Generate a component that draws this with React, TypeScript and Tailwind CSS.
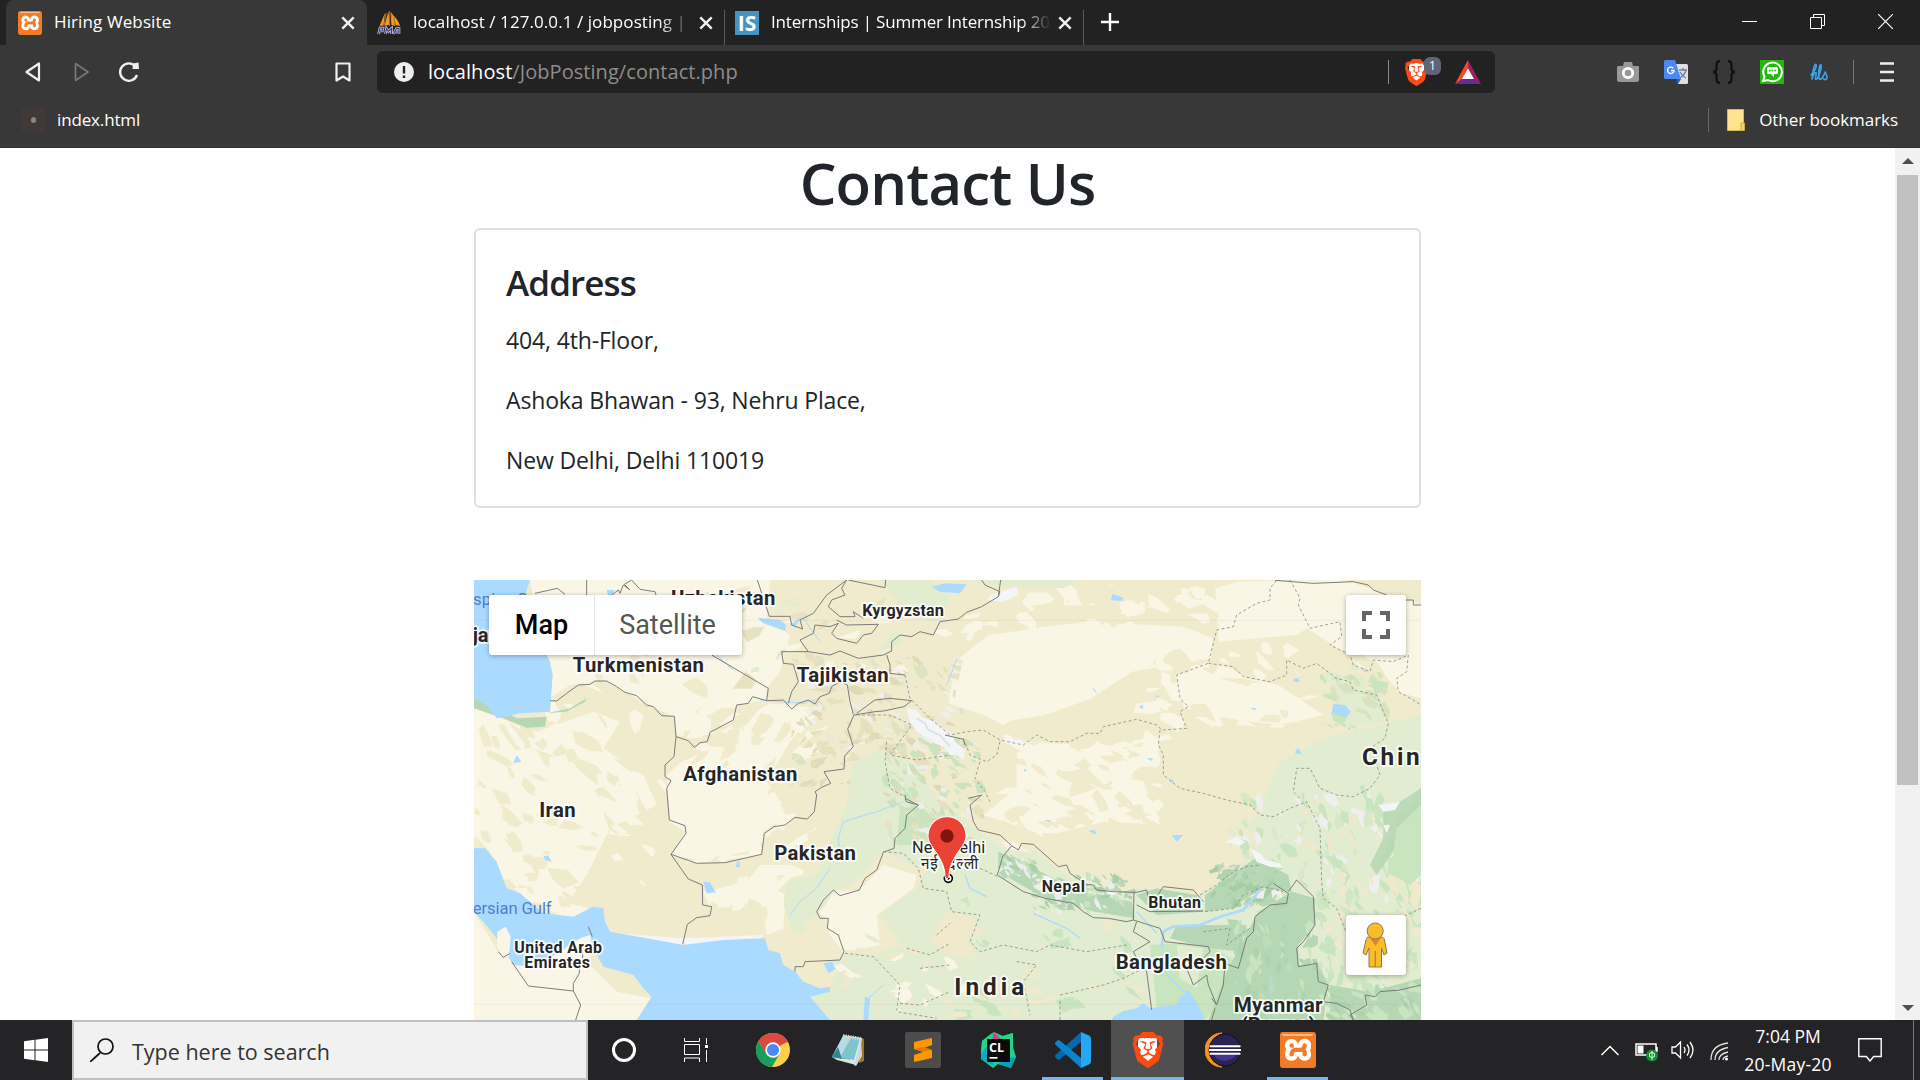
import React from "react";
import { SiBrave, SiXampp } from "react-icons/si";

type P = { className?: string };

/* ---------- small drawings ---------- */

const XamppIcon = ({ className }: P) => (
  <span className={`relative block overflow-hidden rounded-[3px] bg-[#f47b25] ${className ?? ""}`}>
    <span className="absolute inset-[12%] bg-white" />
    <SiXampp className="relative h-full w-full text-[#f47b25]" />
    <span className="absolute inset-x-[8%] top-[5%] h-[7%] rounded-b-full bg-[#fbb98a]" />
  </span>
);

const CloseX = ({ className }: P) => (
  <svg viewBox="0 0 14 14" className={className}>
    <path d="M2 2l10 10M12 2L2 12" stroke="#f0f0f0" strokeWidth="2.100" />
  </svg>
);

const PmaIcon = () => (
  <svg viewBox="0 0 24 24" className="h-6 w-6 shrink-0">
    <path d="M8 2L2.500 15l4-.5zM11.500 0l-4 14.500 5-.5zM13.500 1l1 13 1.500-.5zM17 5l1.500 9 4.500 1C22 11 20 8 17 5z" fill="#f9961e" />
    <path d="M14 1l3.500 5 .5 9-3-1z" fill="#f9961e" />
    <path d="M12.700 0v15M9 2L7 15M17 6l1 9" stroke="#a9743a" strokeWidth="1" />
    <path d="M1.500 23L3 17h3l-.7 3H2.500M8.500 23l1-5.500 2 3 3-3V23M16.500 23l3-5.500H22V23M18 21h4" fill="none" stroke="#c9c9e8" strokeWidth="2.600" />
    <path d="M1.500 23L3 17h3l-.7 3H2.500M8.500 23l1-5.500 2 3 3-3V23M16.500 23l3-5.500H22V23M18 21h4" fill="none" stroke="#3a3a80" strokeWidth="1.100" />
  </svg>
);

const Brave = ({ className }: P) => (
  <span className={`relative block ${className ?? ""}`}>
    <span className="absolute inset-x-[24%] inset-y-[18%] rounded-b-full bg-white" />
    <SiBrave className="relative h-full w-full text-[#fb4b13]" />
  </span>
);

const Chrome = () => (
  <svg viewBox="0 0 34 34" className="h-[34px] w-[34px]">
    <circle cx="17" cy="17" r="17" fill="#fdd04c" />
    <path d="M17 17L31.700 8.500A17 17 0 0 0 2.300 8.500z" fill="#db4a3e" />
    <path d="M17 9.300h15.200A17 17 0 0 0 17 0z" fill="#db4a3e" />
    <path d="M2.300 8.500A17 17 0 0 0 16 34l7.500-13L10 20z" fill="#169f5c" />
    <path d="M2.300 8.500L10.200 21l7-12z" fill="#db4a3e" />
    <path d="M2.300 8.500L9.500 21l4 3.500L17 25l-1.500 9A17 17 0 0 1 2.300 8.500z" fill="#169f5c" />
    <circle cx="17" cy="17" r="7.700" fill="#fff" />
    <circle cx="17" cy="17" r="6" fill="#4788f4" />
  </svg>
);

const Notepad = () => (
  <svg viewBox="0 0 34 34" className="h-[34px] w-[34px]">
    <path d="M30 5l3 1v22l-5 2z" fill="#a87620" />
    <path d="M12 2l19 3-5 27-6-2z" fill="#e9eff0" />
    <path d="M30 5l1 18-6 10-2-1z" fill="#cdd8da" />
    <path d="M12 3l17 3-6 21L1 24z" fill="#7fc3cf" />
    <path d="M12 3l8 1.500L9 25l-8-1z" fill="#b7dde2" />
    <path d="M1 24l22 3 2 5L6 27z" fill="#d9e6e8" />
    <path d="M1 24l6-10 4 12z" fill="#2e8695" />
    <path d="M12 3l18 3" stroke="#d5d5d5" strokeWidth="4" strokeDasharray="1.200 1.200" />
  </svg>
);

const CLion = () => (
  <svg viewBox="0 0 36 36" className="h-9 w-9">
    <path d="M2 9L14 0l9 4 10-3v14l3 10-5 11-13-4-5 4L1 27z" fill="#22d089" />
    <path d="M1 27l1-18 9 12 3 13z" fill="#0fa9c8" />
    <path d="M1 22L2 9l10-8-3 10z" fill="#21d789" />
    <path d="M14 0l8 9H12z" fill="#ed358c" />
    <path d="M23 4l10-3v14z" fill="#21d789" />
    <path d="M36 25l-5 11-13-4 12-6z" fill="#089fbd" />
    <rect x="7" y="7" width="23" height="23" fill="#0a0a0a" />
    <text x="9" y="19.500" fontFamily="Open Sans" fontWeight="700" fontSize="12.500" fill="#fff">CL</text>
    <rect x="9.500" y="25" width="8" height="1.700" fill="#fff" />
  </svg>
);

const Eclipse = () => (
  <svg viewBox="0 0 36 36" className="h-9 w-9">
    <path d="M17 1A17 17 0 0 0 17 35C1 30 1 6 17 1z" fill="#f7941e" stroke="#f7941e" />
    <circle cx="20" cy="18" r="16" fill="#2c2255" stroke="#101018" strokeWidth="1" />
    <path d="M9 23h22c-3 7-18 8-22 0z" fill="#473788" />
    <path d="M4.500 14.200h31M4 18h32M4.500 21.800h31" stroke="#fff" strokeWidth="2" />
  </svg>
);

const Translate = () => (
  <svg viewBox="0 0 24 24" className="h-6 w-6">
    <path d="M10 4h12.500A1.500 1.500 0 0 1 24 5.500v17a1.500 1.500 0 0 1-1.500 1.500H14z" fill="#e0e0e0" />
    <path d="M15 10h8M19 8v2m3 0c-1 4-3 6-6 8m0-6c1 2 4 5 6 6" fill="none" stroke="#6d8296" strokeWidth="1.300" />
    <path d="M1.500 0H11l6 19H1.500A1.500 1.500 0 0 1 0 17.500v-16A1.500 1.500 0 0 1 1.500 0z" fill="#4a89f3" />
    <path d="M12 19h5l-3 5z" fill="#3053c9" />
    <path d="M9.300 8.300A3.200 3.200 0 1 0 10 10.500H7" fill="none" stroke="#fff" strokeWidth="1.400" />
  </svg>
);

const Pegman = () => (
  <svg viewBox="0 0 26 46" className="h-[46px] w-[26px]">
    <path d="M7 15h12c2 0 3 1 3.500 3L25 31l-3 2-2.500-7V45H7V26l-3 7-3-2 3-13c.5-2 1.500-3 3-3z" fill="#fbbc2c" stroke="#8a7a50" strokeWidth="1" />
    <path d="M8 16h11l-5.500 8z" fill="#e0842a" />
    <path d="M13.200 29v16" stroke="#9b7430" strokeWidth="1" />
    <circle cx="13.200" cy="9" r="8" fill="#fbbc2c" stroke="#8a7a50" strokeWidth="1" />
  </svg>
);

/* ---------- terrain map ---------- */

const TAN = "#f1ebcd";
const LIGHT = "#faf6e6";
const WATER = "#aadaff";
const G1 = "#e2ecd0";
const G2 = "#c9e5c0";
const G3 = "#b6d7b4";

function seeded(seed: number) {
  let s = seed;
  return () => {
    s = (s * 16807) % 2147483647;
    return s / 2147483647;
  };
}

type Facet = { d: string; c: string };

function facets(seed: number, n: number, box: number[], size: number, tilt: number, colors: string[]): Facet[] {
  const r = seeded(seed);
  const out: Facet[] = [];
  for (let i = 0; i < n; i++) {
    const cx = box[0] + r() * (box[2] - box[0]);
    const cy = box[1] + r() * (box[3] - box[1]);
    const a = tilt + (r() - 0.5) * 1.1;
    const len = size * (0.4 + r());
    const wid = len * (0.25 + r() * 0.4);
    const k = 4 + Math.floor(r() * 4);
    const pts: string[] = [];
    for (let j = 0; j < k; j++) {
      const t = (j / k) * Math.PI * 2;
      const m = 0.35 + r() * 0.9;
      const px = Math.cos(t) * len * m;
      const py = Math.sin(t) * wid * m;
      pts.push(`${(cx + px * Math.cos(a) - py * Math.sin(a)).toFixed(0)},${(cy + px * Math.sin(a) + py * Math.cos(a)).toFixed(0)}`);
    }
    out.push({ d: pts.join(" "), c: colors[Math.floor(r() * colors.length)] });
  }
  return out;
}

const Facets = ({ list }: { list: Facet[] }) => (
  <g>
    {list.map((f, i) => (
      <polygon key={i} points={f.d} fill={f.c} />
    ))}
  </g>
);

const iranFacets = facets(11, 120, [20, 430, 600, 1060], 44, 0.6, [TAN, TAN, TAN, LIGHT]);
const turkFacets = facets(5, 44, [230, 80, 900, 470], 44, 0.7, [TAN, LIGHT]);
const kazFacets = facets(31, 36, [820, 20, 1540, 330], 36, -0.4, [LIGHT, TAN, "#e7e2c2", G1]);
const afgFacets = facets(17, 75, [640, 380, 1060, 1080], 46, -0.7, [TAN, LIGHT, TAN]);
const pamirFacets = facets(23, 190, [980, 250, 1480, 560], 22, 0.5, ["#e7e0be", "#e0d9b6", TAN, "#eee9d4", "#dfe3c4", "#efefef"]);
const hinduKush = facets(29, 70, [940, 470, 1240, 640], 20, -0.6, ["#e7e0be", "#e2dbb8", TAN, "#efe9cf"]);
const kashmirFacets = facets(41, 150, [1250, 490, 1540, 800], 20, 0.8, ["#d5e6c4", "#dcd9b8", G2, "#eeeeea", "#e7e0be", "#cfe0bd"]);
const northFacets = facets(53, 60, [1560, 30, 2260, 150], 46, 0.4, [LIGHT, TAN]);
const qaidamFacets = facets(59, 60, [2000, 200, 2520, 480], 42, 0.3, [TAN, LIGHT, LIGHT]);
const tibetFacets = facets(61, 130, [1600, 490, 2080, 820], 38, 0.25, [LIGHT, TAN, TAN]);
const tibetSouth = facets(67, 60, [1750, 760, 2320, 930], 26, -0.2, ["#ede5c6", "#eae2c2", TAN]);
const eastFacets = facets(71, 190, [2280, 660, 2853, 980], 28, 1.1, [G1, G2, "#d7e7c9", "#efe8cc", "#efeff0", G1]);
const qinghai = facets(79, 40, [2560, 270, 2740, 460], 24, 0.7, [G1, G2, "#d9e2be"]);
const himFacets = facets(83, 70, [1590, 850, 1700, 900], 18, 0.6, ["#a9cfa9", G3, G2, "#eceeee", "#bcd6b6"]);
const himEast = facets(87, 120, [1690, 900, 1980, 1010], 18, 0.5, ["#a9cfa9", G3, G2, "#eceeee", "#bcd6b6"]);
const arunFacets = facets(89, 60, [2230, 870, 2440, 990], 22, -0.6, ["#a6cca6", G3, "#aed2ac", "#bedabb"]);
const gangaFacets = facets(97, 90, [1430, 980, 2060, 1330], 34, 0.3, [G1, G2, "#f1e9cc", G1]);
const rajFacets = facets(101, 60, [1100, 1090, 1500, 1330], 34, 0.1, ["#f1e9cc", G1, G1, LIGHT]);
const burmaFacets = facets(103, 90, [2290, 1050, 2540, 1330], 26, 1.4, ["#aed2ae", G3, G3, "#bddcba", G2]);
const yunnanFacets = facets(107, 130, [2550, 940, 2853, 1230], 30, 1.2, [G1, G2, G1, "#d2e6c6", "#f1e9cc"]);
const laosFacets = facets(109, 50, [2560, 1240, 2853, 1335], 28, 0.8, ["#aed2ae", G2, G3]);

type LabelProps = { x: number; y: number; w?: number; s?: number; children: string; weight?: number; fill?: string; gap?: number };

const Label = ({ x, y, w, s = 61, children, weight = 700, fill = "#262626", gap }: LabelProps) => (
  <text
    x={x}
    y={y}
    textLength={w}
    fontSize={s}
    fontWeight={weight}
    fill={fill}
    letterSpacing={gap}
    stroke="#fff"
    strokeOpacity={fill === "#262626" ? 0.85 : 0}
    strokeWidth="11"
    strokeLinejoin="round"
    className="[paint-order:stroke]"
    fontFamily="Roboto, 'Noto Sans', sans-serif"
  >
    {children}
  </text>
);

const TerrainMap = () => (
  <svg viewBox="12 15 2841 1320" className="block h-[440px] w-[947px]">
    <rect x="0" y="0" width="2860" height="1340" fill={TAN} />

    {/* pale lowlands */}
    <g fill={LIGHT}>
      <path d="M180 15H900L890 130 960 180 930 290 890 340 890 375 800 390 790 440 700 490 620 480 610 425 520 380 400 315 300 330 240 370z" />
      <path d="M12 400L200 470 370 410 450 440 400 520 520 600 560 690 420 760 350 900 270 1020 110 950 60 830 12 780z" />
      <path d="M690 510L800 440 900 385 1040 400 960 500 890 620 960 720 880 770 880 840 680 865 605 840 645 770 600 740 590 600z" />
      <path d="M12 1010L90 1140 200 1175 330 1080 370 1060 360 1170 440 1250 545 1270 500 1335H12z" />
      <path d="M1240 870L1340 900 1330 940 1220 1020 1230 1110 1120 1130 1080 1080 1070 1030 1040 1010 1090 950 1170 945z" />
      <path d="M700 950L830 920 870 870 960 870 1050 900 950 930 940 1060 890 1080 880 990 720 1000z" />
      <path d="M1455 260L1555 180 1850 140 2140 155 2230 190 2225 250 1985 290 1865 370 1725 420 1605 440 1435 385z" />
      <path d="M2115 300L2255 270 2330 310 2425 330 2560 420 2430 450 2270 430 2145 400z" />
      <path d="M2235 20L2620 15 2853 90V370L2780 350 2720 260 2620 230 2510 160 2480 180 2245 200z" />
      <path d="M1640 500L1860 510 2045 490 2075 560 2020 620 2085 770 1925 750 1720 780 1540 720 1640 640z" />
    </g>

    <Facets list={iranFacets} />
    <Facets list={turkFacets} />
    <Facets list={kazFacets} />
    <Facets list={afgFacets} />
    <Facets list={northFacets} />
    <Facets list={pamirFacets} />
    <Facets list={hinduKush} />
    <Facets list={qaidamFacets} />
    <Facets list={tibetFacets} />
    <path d="M2065 500L2300 450 2600 470 2560 560 2400 640 2280 740 2090 760z" fill={TAN} />
    <path d="M1475 270L1500 225 1560 190 1640 170 1720 155 1800 148 1900 152 1960 160 2040 155 2100 170 2130 210 2090 240 2010 262 1960 300 1880 335 1840 370 1760 395 1720 415 1640 425 1600 450 1520 410 1450 390z" fill={LIGHT} />
    <path d="M660 700L830 660 900 690 860 760 830 830 680 855 620 840 650 770z" fill={LIGHT} />
    <path d="M410 940L480 915 600 960 690 1000 680 1050 640 1090 520 1080 420 1060z" fill={TAN} />
    <path d="M2235 40L2320 15 2230 15zM2560 210L2680 240 2780 340 2800 420 2853 430V560L2700 600 2620 480 2520 330 2450 260z" fill={TAN} />
    <Facets list={tibetSouth} />

    {/* vegetation */}
    <g fill={G1}>
      <path d="M1060 850L1130 690 1150 560 1240 520 1320 560 1425 700 1440 870 1320 870 1240 830 1180 900 1120 940 1090 950 1060 1000 1000 1050 1010 1070 970 1070 940 990 950 920 1040 900z" />
      <path d="M1130 1130L1220 1140 1290 1100 1230 1020 1340 940 1380 860 1440 700 1525 770 1625 830 1725 830 1795 900 1905 950 2025 940 2185 960 2305 880 2385 790 2330 760 2370 700 2395 640 2430 560 2560 490 2853 420V1335H1070L1020 1265 1080 1240z" />
      <path d="M1230 15L1330 130 1420 140 1440 60 1380 15z" />
      <path d="M2560 280L2640 310 2730 360 2750 440 2620 460z" />
      <path d="M1480 15L1560 30 1780 40 1830 15z" />
    </g>
    <path d="M2730 860L2780 760 2853 640V1060L2790 1000z" fill={G2} />
    <path d="M1290 700L1350 690 1420 760 1400 810 1280 810z" fill={G2} />
    <path d="M1700 840L1800 905 1905 950 2025 940 2180 955 2290 885 2380 790 2300 760 1900 740 1700 790z" fill={TAN} />
    <path d="M1430 1010L1500 1020 1530 1060 1510 1150 1440 1140 1380 1100z" fill="#f1e9cc" />
    <Facets list={kashmirFacets} />
    <Facets list={gangaFacets} />
    <Facets list={rajFacets} />
    <Facets list={eastFacets} />
    <Facets list={yunnanFacets} />
    <Facets list={qinghai} />
    <path d="M2780 720L2853 680V900L2820 930 2770 900 2780 820z" fill={G2} />
    <path d="M2040 1110L2200 1100 2330 1180 2210 1330 2060 1300z" fill={G2} />
    <path d="M2120 1110L2200 1120 2180 1240 2130 1210z" fill={G1} />
    <g fill={G3}>
      <path d="M1585 830L1675 870 1825 950 1985 980 1995 1030 1875 1010 1725 970 1585 890z" />
      <path d="M2000 960L2060 940 2180 960 2200 1010 2060 1020z" />
      <path d="M2205 960L2355 850 2455 900 2465 950 2375 940 2285 1000 2205 1010z" />
      <path d="M2120 1050L2330 1050 2310 1130 2220 1120 2100 1090z" />
      <path d="M2365 1010L2465 950 2535 970 2535 1050 2485 1110 2485 1170 2545 1170 2575 1230 2560 1335H2215L2275 1180z" />
      <path d="M2580 1230L2700 1250 2853 1210V1335H2580z" />
      <path d="M2740 690L2790 680 2853 640 2853 690 2780 760 2770 830 2720 900 2700 870 2740 790z" opacity=".85" />
    </g>
    <path d="M12 370L70 390 140 430 230 425 225 455 170 458 100 430 12 400z" fill={G3} />
    <path d="M230 415L300 400 350 370 345 380 290 410z" fill={G3} />
    <Facets list={himFacets} />
    <Facets list={himEast} />
    <Facets list={arunFacets} />
    <Facets list={burmaFacets} />
    <Facets list={laosFacets} />

    {/* snow and glaciers */}
    <g fill="#f4f5f7">
      <path d="M1310 400L1340 405 1355 425 1395 440 1410 455 1450 480 1455 500 1485 525 1480 555 1460 540 1440 540 1420 515 1395 505 1375 490 1340 470 1320 440z" />
      <path d="M1560 60L1640 35 1645 60 1600 80 1555 75z" />
      <path d="M1600 492L1660 495 1650 510 1610 508z" />
      <path d="M2265 800L2300 785 2325 800 2310 812zM2340 820L2370 835 2385 855 2430 865 2440 880 2400 875 2360 860z" />
      <path d="M2725 690L2790 680 2775 705 2740 710zM2740 750L2760 750 2750 775z" />
      <path d="M1715 900L1740 905 1750 925 1725 915zM1910 945L1950 950 1930 960 1910 958z" />
      <path d="M440 1075L640 1090 880 1080 870 1100 640 1112 480 1092z" />
      <path d="M1170 265l20 5-10 15zM1060 330l22-10-4 14zM2650 255l30 20-12 4z" />
    </g>
    <path d="M1340 430l25 15 10 20 35 15 30 35" fill="none" stroke="#e0e0e6" strokeWidth="6" />

    {/* water */}
    <g fill={WATER}>
      <path d="M12 15H180L165 60 200 180 240 260 248 300 240 410 150 415 80 430 50 390 12 370z" />
      <path d="M12 820L45 820 80 860 110 940 150 955 220 1015 310 1025 370 995 400 1000 405 1040 420 1070 530 1090 640 1110 760 1095 885 1090 895 1125 930 1135 940 1170 975 1190 1000 1220 1050 1240 1080 1235 1080 1250 1020 1265 1080 1335H500L545 1265 520 1240 490 1200 400 1175 370 1120 360 1080 330 1090 200 1175 130 1170 80 1090 40 1040 12 1010z" />
      <path d="M1930 1325L1960 1308 2000 1300 2020 1285 2040 1300 2115 1290 2135 1265 2155 1245 2185 1290 2205 1335H1925z" />
      <path d="M862 128L930 135 948 150 945 168 880 145zM960 150L995 125 975 155z" />
      <path d="M1385 35L1425 25 1490 28 1470 55 1410 50z" />
      <path d="M1928 57L1960 68 1955 78 1922 76zM2590 387L2625 390 2642 410 2630 427 2585 415zM2470 312l15-3 4 12h-16z" />
      <path d="M700 920L720 922 737 952 710 955zM800 862l8-5 2 20h-12zM1060 1165l25-5 12 22-22 13z" />
      <path d="M130 565l10-25 14 20zM220 842l15 0 10 20-20-8zM410 45h22l-4 15h-14z" />
      <path d="M2105 780h35l-20 20zM1855 768l18-4 8 16zM1725 735l15 0 5 8zM2475 530l10-12 10 18h-18zM2030 550h20l-6 8zM2100 620l8-8 4 14zM2005 395l15-5-2 12zM1660 580l10 5-5 7zM2630 465l15-12-5 12zM2050 362h20l-6 5zM2340 398l20 2-6 6z" />
      <path d="M1185 1265L1200 1270 1195 1335H1180z" />
    </g>
    <path d="M82 1070l25-15 15 30-5 60-20 3-15-35z" fill={LIGHT} />
    <g fill="none" stroke={WATER} strokeWidth="5">
      <path d="M1300 680L1220 710 1120 740 1105 790 1110 850M1080 880L1040 940 990 980 960 1020" strokeWidth="3" />
      <path d="M2370 945L2320 1005 2250 1025 2190 1050 2110 1055 2080 1070 2075 1120" strokeWidth="8" />
      <path d="M1485 900L1500 940 1550 965M1690 1015L1790 1060 1830 1090M2000 1010L2060 1075M2090 1200L2130 1240 2150 1255" strokeWidth="4" />
      <path d="M1000 130L1050 200M740 240L790 285M870 375L1000 385 1050 370M1195 1270L1240 1230M2400 1200V1260L2420 1280M1430 330l30-75M1870 340l10 15" strokeWidth="3" />
    </g>

    {/* country borders */}
    <g fill="none" stroke="#7c7c7c" strokeWidth="3" strokeLinejoin="round">
      <path d="M240 377L260 378 290 355 325 330 360 328 375 318H410L440 335 465 352 500 362 530 390 550 395 575 422 613 424 618 485 655 497 673 517 690 503 712 500 720 472 790 435 800 390 835 385 848 365 890 377 940 375 965 402 985 385 1015 375 1035 387 1050 365 1078 355 1085 335 1110 320 1132 330 1140 380 1150 418" />
      <path d="M618 485L612 545 585 570 585 605 603 617 590 640 598 735 645 752 648 775 603 838 680 865 765 863 875 838 883 775 912 755 945 750 975 727 1012 732 1033 710 1040 660 1035 650 1055 637 1082 625 1062 590 1122 582 1124 543 1150 515 1133 462 1152 420 1215 410 1240 408 1302 395 1325 377 1260 370 1215 375 1160 415" />
      <path d="M603 838L655 912 697 930 698 990 725 995 720 1022 680 1028 652 1048 638 1108" />
      <path d="M195 55L262 40 285 58M350 15V60M425 60L445 45 450 55 460 30 480 45 463 28 485 15 510 43 555 50 558 60M725 240L895 340 890 375M862 15L898 124H960L965 150 998 162 990 135 1030 115 1070 60 1110 30 1130 15" />
      <path d="M1135 15L1245 38 1247 15M1130 15L1115 40 1125 60 1085 75 1075 95 1110 125 1155 125 1150 110 1180 130M1100 135L1130 150 1225 148 1205 175 1180 180 1160 205 1100 190 1085 175 1105 145 1080 155 1035 150 1030 175 990 195 1015 230 1080 240 1110 228 1165 250 1240 240 1265 228 1265 200 1290 180 1325 185 1350 170 1390 180 1410 140 1465 132 1490 112 1535 95 1585 65 1590 50 1545 30 1535 15M1585 65L1592 15" />
      <path d="M1015 230L935 230 940 265 970 268 985 320 965 350 955 385M1250 240L1260 270 1260 295 1305 300" />
      <path d="M2415 16L2530 25 2650 20 2695 30 2710 45 2750 60M2805 75H2830V90H2853M1425 480L1480 493 1485 510" />
      <path d="M1305 660L1308 680 1345 690 1310 720 1305 760 1275 790 1272 820 1240 832 1220 885 1185 910 1168 945 1110 962 1090 945 1060 975 1040 1010 1050 1030 1075 1030 1072 1060 1105 1080 1122 1130 1110 1155 1005 1160 1000 1175 975 1175 975 1190" />
      <path d="M1305 670L1345 690M1495 670L1535 660 1500 690 1510 740 1525 765 1590 780 1625 812 1645 825 1655 805 1690 808 1765 875 1790 870 1800 895 1850 928 1870 930 1880 945 1930 950 2000 952 2030 945 2035 970M1625 812L1598 845 1582 900 1660 950 1725 970 1810 985 1840 1010 1870 1028 1915 1030 1970 1040 1990 1035 1992 950M2060 965L2080 935 2170 945 2200 980M2000 990L2040 1010 2200 1008" />
      <path d="M1990 1035L2070 1060 2085 1100 2215 1115 2220 1130 2180 1170 2150 1180 2170 1230 2210 1200 2215 1230 2240 1290 2260 1230 2265 1165 2305 1180 2330 1090 2350 1070 2355 1025 2400 990 2450 985 2455 955 2410 925M2000 1040L1990 1070 2040 1100 1990 1130 2005 1160 2030 1190 2045 1305M2455 950L2480 915 2530 965 2535 1050 2500 1100 2480 1120 2485 1175 2540 1165 2545 1220 2575 1230 2560 1280 2600 1285 2640 1305 2650 1335M2853 1230L2790 1245 2730 1250 2715 1265 2685 1260 2690 1290 2640 1320 2650 1335M2240 1290L2225 1270M2235 1300L2225 1335" />
      <path d="M125 1160L175 1233 310 1248 310 1225 328 1195V1160M310 1248L332 1290 317 1335M355 1055L367 1085M85 1130L100 1147 120 1135M338 1150v-25" />
    </g>

    {/* disputed and provincial lines */}
    <g fill="none" stroke="#8d8d86" strokeWidth="2.500" strokeDasharray="9 7">
      <path d="M1305 300L1320 370 1380 430 1440 480 1490 470 1540 465 1590 495 1660 510 1700 480 1740 500 1800 500 1850 475 1890 475 1900 455 2000 433 2060 450 2075 465 2150 460 2130 410 2155 395 2130 370 2120 300 2215 265 2240 165 2290 155 2300 120 2360 85 2400 75 2400 40 2420 15M2460 15L2490 70 2485 90 2520 160 2610 140 2615 185 2580 210 2640 240 2650 270 2700 290 2710 255 2770 260 2815 240 2810 290 2780 310 2785 350 2830 375 2853 390" />
      <path d="M2215 265L2290 275 2320 305 2400 320 2450 300 2450 255 2500 280 2540 265 2600 310 2640 320 2650 345 2720 360 2740 410 2755 445 2745 490 2700 520 2720 570 2730 600 2700 640 2650 665 2600 660 2550 640 2520 580 2480 580 2470 650 2490 670M2070 465L2065 510 2080 540 2080 600 2130 640 2200 655 2270 675 2340 690 2370 720 2410 725 2460 700 2510 680 2550 760 2555 920 2560 970 2600 1000 2640 1100 2720 1060 2853 1000" />
      <path d="M1480 490L1500 540 1550 560 1580 540 1590 500M1530 560L1515 610 1545 650 1560 680M1250 500L1245 560 1260 640 1305 665M1160 420L1260 420 1325 450 1260 540 1340 555 1440 540" />
      <path d="M1240 830L1300 835 1345 880 1360 940 1430 950 1445 1010 1530 1020 1500 1100 1530 1130 1600 1110 1700 1130 1740 1110 1850 1130 1970 1110M1125 1135L1210 1145 1290 1230 1280 1310 1400 1330M1290 1285L1350 1290 1440 1250M1400 1080L1440 1045M1310 1120L1380 1140 1440 1105M1350 1180L1440 1170M1640 1160L1700 1170 1660 1220 1680 1320M1770 1260L1900 1230 1960 1210 2020 1180M1770 1335V1270" />
      <path d="M2190 960L2240 930 2290 890 2330 875 2370 870M2205 1010L2290 1000 2320 960 2380 935 2440 950M2200 1070L2280 1060 2270 1110 2340 1060M1530 880L1585 905" />
    </g>
    <path d="M12 1288H2853M12 136H2853" stroke="#999" strokeOpacity=".18" strokeWidth="2" />

    {/* names */}
    <Label x={-18} y={90} s={50} weight={400} fill="#4f80cc">aspian Sea</Label>
    <Label x={8} y={200} s={60}>jan</Label>
    <Label x={603} y={90} w={313}>Uzbekistan</Label>
    <Label x={308} y={292} w={394}>Turkmenistan</Label>
    <Label x={1177} y={123} w={245} s={49}>Kyrgyzstan</Label>
    <Label x={980} y={322} w={276}>Tajikistan</Label>
    <Label x={640} y={619} w={342}>Afghanistan</Label>
    <Label x={208} y={725} w={109}>Iran</Label>
    <Label x={913} y={854} w={245}>Pakistan</Label>
    <Label x={8} y={1016} w={237} s={50} weight={400} fill="#4f80cc">ersian Gulf</Label>
    <Label x={133} y={1135} w={263} s={48}>United Arab</Label>
    <Label x={163} y={1179} w={197} s={48}>Emirates</Label>
    <Label x={1326} y={834} w={220} s={49} weight={400}>New Delhi</Label>
    <Label x={1353} y={882} w={172} s={46} weight={400}>नई दिल्ली</Label>
    <Label x={1715} y={950} w={130} s={48}>Nepal</Label>
    <Label x={2035} y={998} w={158} s={48}>Bhutan</Label>
    <Label x={1937} y={1183} w={334}>Bangladesh</Label>
    <Label x={1453} y={1260} w={210} s={73}>India</Label>
    <Label x={2676} y={569} s={73} gap={8}>China</Label>
    <Label x={2291} y={1310} w={267} s={62}>Myanmar</Label>
    <Label x={2312} y={1370} w={225} s={62}>(Burma)</Label>

    {/* marker */}
    <circle cx="1435" cy="910" r="12" fill="#fff" stroke="#000" strokeWidth="5" />
    <circle cx="1435" cy="910" r="4" fill="#000" />
    <path
      d="M1425 906C1425 880 1416 858 1398 832 1385 812 1374 800 1374 782a57 57 0 0 1 114 0C1488 800 1477 812 1464 832 1446 858 1437 880 1437 906q-6 10-12 0z"
      fill="#ea4335"
      stroke="#fff"
      strokeWidth="3"
    />
    <circle cx="1431" cy="783" r="20" fill="#811411" />
  </svg>
);

/* ---------- browser chrome ---------- */

const Tabs = () => (
  <div className="flex h-[45px] bg-[#222222] text-[17px] text-white">
    <div className="ml-1.5 flex h-[45px] w-[361px] items-center rounded-t-lg bg-[#383838] pl-3">
      <XamppIcon className="h-6 w-6 shrink-0" />
      <span className="ml-3 grow pb-0.5 tracking-[0.11px]">Hiring Website</span>
      <CloseX className="mr-[11px] h-4 w-4" />
    </div>
    <div className="flex h-[45px] w-[357px] items-center pl-2.5">
      <PmaIcon />
      <span className="ml-3 w-[272px] whitespace-nowrap pb-0.5 tracking-[0.07px] [mask-image:linear-gradient(to_right,black_245px,transparent_280px)]">
        localhost / 127.0.0.1 / jobposting |
      </span>
      <CloseX className="ml-[13px] h-4 w-4 shrink-0" />
    </div>
    <div className="mt-2.5 h-[35px] w-px bg-[#5c5c5c]" />
    <div className="flex h-[45px] w-[358px] items-center pl-[10px]">
      <span className="flex h-6 w-6 shrink-0 items-center justify-center bg-[#4595c4] text-[21px] font-bold leading-6">IS</span>
      <span className="ml-3 w-[278px] whitespace-nowrap pb-0.5 tracking-[-0.18px] [mask-image:linear-gradient(to_right,black_250px,transparent_280px)]">
        Internships | Summer Internship 20
      </span>
      <CloseX className="ml-2 h-4 w-4 shrink-0" />
    </div>
    <div className="mt-2.5 h-[35px] w-px bg-[#5c5c5c]" />
    <svg viewBox="0 0 18 18" className="ml-[17px] mt-[13px] h-[18px] w-[18px]">
      <path d="M9 0v18M0 9h18" stroke="#fff" strokeWidth="2.400" />
    </svg>
    <div className="ml-auto mr-[27px] flex items-center gap-[53px] pb-[3px]">
      <span className="h-px w-[15px] bg-white" />
      <svg viewBox="0 0 15 15" className="h-[15px] w-[15px]">
        <path d="M.5 3.500h11v11H.5zM3.500 3.500v-3h11v11h-3" fill="none" stroke="#fff" />
      </svg>
      <svg viewBox="0 0 15 15" className="h-[15px] w-[15px]">
        <path d="M0 0l15 15M15 0L0 15" stroke="#fff" strokeWidth="1.200" />
      </svg>
    </div>
  </div>
);

const Toolbar = () => (
  <div className="flex h-[54px] items-center">
    <div className="flex w-[377px] items-center">
      <svg viewBox="0 0 16 20" className="ml-[25px] h-5 w-4">
        <path d="M14 1.500v17L1.500 10z" fill="none" stroke="#f0f0f0" strokeWidth="2.200" strokeLinejoin="round" />
      </svg>
      <svg viewBox="0 0 16 20" className="ml-[33px] h-5 w-4">
        <path d="M1.500 1.500v17L14 10z" fill="none" stroke="#777" strokeWidth="1.800" strokeLinejoin="round" />
      </svg>
      <svg viewBox="0 0 22 22" className="ml-7 h-[22px] w-[22px]">
        <path d="M17.500 5.500A8.700 8.700 0 1 0 19 14" fill="none" stroke="#f0f0f0" strokeWidth="2.300" />
        <path d="M15 2.500l5.500-1 .5 6.500h-6.500z" fill="#f0f0f0" />
      </svg>
      <svg viewBox="0 0 16 20" className="ml-[195px] h-5 w-4">
        <path d="M1.500 1.500h13v17L8 14.500l-6.500 4z" fill="none" stroke="#f0f0f0" strokeWidth="2.200" strokeLinejoin="round" />
      </svg>
    </div>
    <div className="flex h-[42px] w-[1118px] items-center rounded-md bg-[#222222]">
      <svg viewBox="0 0 20 20" className="ml-[17px] h-5 w-5">
        <circle cx="10" cy="10" r="10" fill="#eee" />
        <path d="M10 4v7.500M10 13.500v2.500" stroke="#222" strokeWidth="2.400" />
      </svg>
      <span className="ml-3.5 grow text-[20px] tracking-[0.06px] text-[#8d8d8d]">
        <span className="text-white">localhost</span>/JobPosting/contact.php
      </span>
      <span className="h-6 w-px bg-[#8c8c8c]" />
      <span className="relative ml-[14px] block">
        <Brave className="h-[29px] w-[27px]" />
        <span className="absolute -right-[11px] -top-px flex h-[18px] w-[17px] items-center justify-center rounded-[6px] bg-[#606478] text-xs text-white">1</span>
      </span>
      <svg viewBox="0 0 26 24" className="ml-[25px] mr-3.5 h-6 w-[26px]">
        <path d="M13 0L0 24l13-7z" fill="#ff4724" />
        <path d="M13 0l13 24-13-7z" fill="#9e1f63" />
        <path d="M0 24h26l-7-5H7z" fill="#662d91" />
        <path d="M13 8.500L19 19H7z" fill="#fff" />
      </svg>
    </div>
    <div className="flex grow items-center pr-[26px]">
      <svg viewBox="0 0 24 22" className="ml-[121px] h-[22px] w-6">
        <path d="M2 5h5l1-4h8l1 4h5q1 0 1 1v13q0 2-2 2H3q-2 0-2-2V6z" fill="#989898" />
        <circle cx="12" cy="12" r="4.700" fill="none" stroke="#fff" strokeWidth="2.800" />
      </svg>
      <span className="ml-6"><Translate /></span>
      <svg viewBox="0 0 24 24" className="ml-6 h-6 w-6">
        <path d="M8 1C3 1 5 6 4.500 9 4 11 3 12 1 12c2 0 3 1 3.500 3C5 18 3 23 8 23M16 1c5 0 3 5 3.500 8 .5 2 1.500 3 3.500 3-2 0-3 1-3.500 3-.5 3 1.500 8-3.500 8" fill="none" stroke="#111" strokeWidth="2.300" />
      </svg>
      <svg viewBox="0 0 24 24" className="ml-6 h-6 w-6">
        <rect width="24" height="24" fill="#24b90a" />
        <path d="M3 21l1.500-4.500A9.300 9.300 0 1 1 8 20z" fill="none" stroke="#fff" strokeWidth="2" />
        <path d="M8.500 7h8q1.500 0 1.500 1.500v4q0 1.500-1.500 1.500h-2.500v3l-3-3H8.500Q7 14 7 12.500v-4Q7 7 8.500 7z" fill="#fff" />
        <path d="M9 10.500h7" stroke="#24b90a" strokeWidth="1.300" strokeDasharray="1.800 .8" />
      </svg>
      <svg viewBox="0 0 20 18" className="ml-[26px] h-[18px] w-5">
        <path d="M1 12C5 8 7 3 6 1.500 4.500 0 2.500 9 2 16.500 3 12 5 9 6 9.500s-1.500 7 0 7c2 0 6-11 5-14.500C9 0 7.500 16.500 10 16.500c2 0 4-5 5.500-8-.5 3 3 5 1 7.500-1 1.200-2.500.5-3-.5" fill="none" stroke="#3ea4ef" strokeWidth="1.600" strokeLinecap="round" />
      </svg>
      <span className="ml-[23px] h-6 w-px bg-[#777]" />
      <svg viewBox="0 0 14 20" className="ml-auto h-5 w-3.5">
        <path d="M0 1.500h14M0 10h14M0 18.500h14" stroke="#eee" strokeWidth="2.400" />
      </svg>
    </div>
  </div>
);

const Bookmarks = () => (
  <div className="flex h-[49px] items-center border-b border-[#303030] pb-[7px] text-[17px] text-white">
    <span className="ml-[21px] flex h-6 w-6 items-center justify-center bg-[#403936]">
      <span className="h-1.5 w-[5px] rounded-full bg-[#858585]" />
    </span>
    <span className="ml-3 tracking-[-0.15px]">index.html</span>
    <span className="ml-auto h-6 w-px bg-[#666]" />
    <svg viewBox="0 0 18 22" className="ml-[18px] h-[22px] w-[18px]">
      <path d="M.5.5h16v21H.5z" fill="#ffe391" stroke="#d9b64e" />
      <path d="M14 14h3.500v7.500H14z" fill="#f6d263" stroke="#d0a93e" />
    </svg>
    <span className="mr-[22px] ml-[14px] tracking-[-0.05px]">Other bookmarks</span>
  </div>
);

/* ---------- page ---------- */

const Page = () => (
  <div className="flex h-[872px] bg-white">
    <main className="flex w-[1895px] flex-col items-center overflow-hidden text-[#212529]">
      <h1 className="h-20 shrink-0 text-[58px] font-semibold leading-[69px] tracking-[-0.8px]">Contact Us</h1>
      <section className="h-[280px] w-[947px] shrink-0 rounded-md border-2 border-[#dfdfdf] px-[30px] pt-[29px]">
        <h2 className="text-[35px] font-semibold leading-[48px] tracking-[-0.9px]">Address</h2>
        <div className="mt-[15px] flex flex-col gap-6 text-[23px] leading-9 tracking-[-0.15px]">
          <p>404, 4th-Floor,</p>
          <p>Ashoka Bhawan - 93, Nehru Place,</p>
          <p>New Delhi, Delhi 110019</p>
        </div>
      </section>
      <section className="relative mt-[72px] h-[440px] w-[947px] shrink-0 overflow-hidden font-['Roboto',sans-serif]">
        <TerrainMap />
        <div className="absolute left-[15px] top-[15px] flex h-[60px] overflow-hidden rounded-[3px] bg-white text-[27px] shadow-[0_1px_5px_rgba(0,0,0,0.3)]">
          <span className="flex w-[105px] items-center justify-center font-medium text-black">Map</span>
          <span className="flex w-[148px] items-center justify-center border-l border-[#e6e6e6] pr-0.5 text-[#565656]">Satellite</span>
        </div>
        <div className="absolute right-[15px] top-[15px] flex h-[60px] w-[60px] items-center justify-center rounded-[3px] bg-white shadow-[0_1px_5px_rgba(0,0,0,0.3)]">
          <svg viewBox="0 0 28 28" className="h-7 w-7">
            <path d="M2 10V2h8M18 2h8v8M26 18v8h-8M10 26H2v-8" fill="none" stroke="#666" strokeWidth="4" />
          </svg>
        </div>
        <div className="absolute right-[15px] top-[335px] flex h-[60px] w-[60px] items-center justify-center rounded-[3px] bg-white pr-0.5 shadow-[0_1px_5px_rgba(0,0,0,0.3)]">
          <Pegman />
        </div>
      </section>
    </main>
    <div className="flex w-[25px] flex-col items-center bg-[#f1f1f1]">
      <svg viewBox="0 0 12 6" className="mt-2.5 h-1.5 w-3"><path d="M0 6l6-6 6 6z" fill="#505050" /></svg>
      <div className="mt-[11px] h-[610px] w-[21px] bg-[#c1c1c1]" />
      <svg viewBox="0 0 12 6" className="mb-[9px] mt-auto h-1.5 w-3"><path d="M0 0l6 6 6-6z" fill="#505050" /></svg>
    </div>
  </div>
);

/* ---------- taskbar ---------- */

const Slot = ({ children, on, lit }: { children: React.ReactNode; on?: boolean; lit?: boolean }) => (
  <div className={`relative flex h-[60px] w-[73px] shrink-0 items-center justify-center ${lit ? "bg-[#505050]" : ""}`}>
    {children}
    {(on || lit) && <span className={`absolute bottom-0 h-[3px] bg-[#76b5f0] ${lit ? "w-full" : "w-[61px]"}`} />}
  </div>
);

const Taskbar = () => (
  <div className="flex h-[60px] bg-[#242426] text-white">
    <div className="flex w-[72px] items-center justify-center">
      <svg viewBox="0 0 24 24" className="h-6 w-6">
        <path d="M0 3.300L10.500 1.800V11.500H0zM11.500 1.700L24 0v11.500H11.500zM0 12.500h10.500v9.700L0 20.700zM11.500 12.500H24V24l-12.500-1.700z" fill="#fff" />
      </svg>
    </div>
    <div className="flex h-[60px] w-[516px] items-center border-2 border-[#c0c0c0] bg-[#f1f1f1]">
      <svg viewBox="0 0 24 24" className="ml-4 h-6 w-6">
        <path d="M10 15L0 24" stroke="#111" strokeWidth="1.800" />
        <circle cx="15.500" cy="8.500" r="7.500" fill="none" stroke="#111" strokeWidth="1.700" />
      </svg>
      <span className="ml-[18px] pt-1 text-[21.500px] text-[#333]">Type here to search</span>
    </div>
    <div className="-ml-px"><Slot><span className="h-6 w-6 rounded-full border-[3px] border-white" /></Slot></div>
    <Slot>
      <svg viewBox="0 0 25 24" className="h-6 w-[25px]">
        <path d="M.5 0v3.500h15V0M.5 6.500h15v10H.5zM.5 24v-4h15v4M22.500 0v6M22.500 12v12" fill="none" stroke="#fff" />
        <rect x="21" y="7" width="3" height="3" fill="#fff" />
      </svg>
    </Slot>
    <div className="flex gap-0.5 pl-[3px]">
      <Slot><Chrome /></Slot>
      <Slot><Notepad /></Slot>
      <Slot>
        <svg viewBox="0 0 36 36" className="h-9 w-9">
          <rect width="36" height="36" rx="2" fill="#4c4c4c" />
          <path d="M27 6v7l-8 3 8 2.500v7.500L9 30v-7l9-3-9-3v-7z" fill="#ff9800" />
          <path d="M9 17l9 3 9-2.500L18 15z" fill="#d97f00" />
        </svg>
      </Slot>
      <Slot><CLion /></Slot>
      <Slot on>
        <svg viewBox="0 0 36 36" className="h-9 w-9">
          <path d="M26 0v10L4.500 27.500q-1 .7-2 0L.5 25.500q-1-1.300 0-2.500z" fill="#0569b0" />
          <path d="M.5 12.800q-1-1.500 0-2.600l2-1.800q1-.7 2.200 0L26 26v10z" fill="#0a86d1" />
          <path d="M26 0l8 3.500q2 1 2 3v23q0 2-2 3L26 36q-.5 0 0-1z" fill="#25a7f2" />
        </svg>
      </Slot>
      <Slot lit><Brave className="h-9 w-9" /></Slot>
      <Slot><Eclipse /></Slot>
      <Slot on><XamppIcon className="h-9 w-9" /></Slot>
    </div>
    <div className="ml-auto flex items-center">
      <svg viewBox="0 0 18 11" className="h-[11px] w-[18px]"><path d="M.5 10L9 1.500 17.500 10" fill="none" stroke="#fff" strokeWidth="1.500" /></svg>
      <svg viewBox="0 0 24 20" className="ml-4 mt-1 h-5 w-6">
        <path d="M1 2h20v11H1zM22 5v5" fill="none" stroke="#fff" strokeWidth="1.500" />
        <rect x="2.500" y="3.500" width="6" height="8" fill="#fff" />
        <circle cx="17" cy="13.500" r="6" fill="#15902a" />
        <path d="M17 9v9M14.500 11.500q2.500-2 5 0v3q-2.500 2-5 0z" fill="none" stroke="#fff" strokeWidth=".9" />
      </svg>
      <svg viewBox="0 0 24 20" className="ml-3 h-5 w-6">
        <path d="M1 7h3.500L9.500 2v16l-5-5H1zM13 7q2 3 0 6M16 4.500q4 5.500 0 11M19 2q6 8 0 16" fill="none" stroke="#fff" strokeWidth="1.300" />
      </svg>
      <svg viewBox="0 0 19 19" className="ml-[15px] mt-0.5 h-[19px] w-[19px]">
        <path d="M1 18Q1 3 18 1M5 18Q5 8 18 5.500M9 18Q9 12 18 10M13 18q0-3 5-4" fill="none" stroke="#e0e0e0" strokeWidth="1.300" />
        <circle cx="16.500" cy="17" r="1.500" fill="#fff" />
      </svg>
      <div className="ml-[13px] flex w-[92px] flex-col items-center whitespace-nowrap pb-px text-[17.500px] leading-7">
        <span>7:04 PM</span>
        <span className="tracking-[0.2px]">20-May-20</span>
      </div>
      <svg viewBox="0 0 24 24" className="ml-6 h-6 w-6"><path d="M.8.8h22.400v17.700h-7.500L12 23l-3.700-4.500H.8z" fill="none" stroke="#fff" strokeWidth="1.400" /></svg>
      <span className="ml-[31px] mr-1.5 h-[60px] w-px bg-[#777]" />
    </div>
  </div>
);

export default function App() {
  return (
    <div className="h-[1080px] w-[1920px] overflow-hidden bg-[#383838] font-['Open_Sans','Noto_Sans',sans-serif]">
      <Tabs />
      <Toolbar />
      <Bookmarks />
      <Page />
      <Taskbar />
    </div>
  );
}
